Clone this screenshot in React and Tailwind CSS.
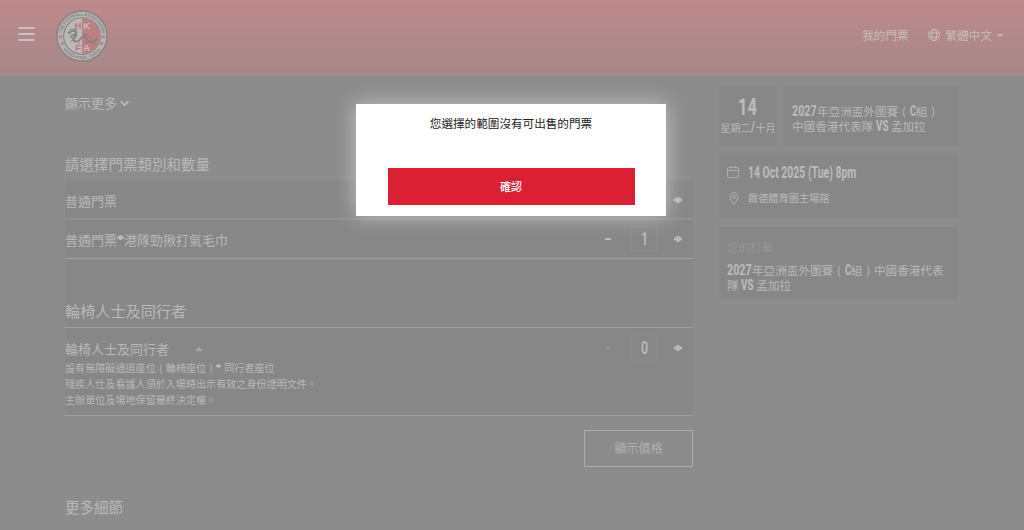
import React from "react";
import { ChevronDown } from "lucide-react";

function Condensed({ children, box, scale }) {
  return (
    <span className={`inline-block whitespace-nowrap align-baseline ${box}`}>
      <span className={`inline-block origin-left font-['Roboto'] font-extrabold text-[#bababa] ${scale}`}>{children}</span>
    </span>
  );
}

function Paren({ children }) {
  return <span className="inline-block w-[1em] text-center">{children}</span>;
}

function Crest() {
  return (
    <svg viewBox="0 0 52 52" className="h-[52px] w-[52px]" aria-hidden="true">
      <defs>
        <path id="crest-top" d="M5.7 26a20.3 20.3 0 0 1 40.6 0" />
        <path id="crest-bottom" d="M2.9 26a23.1 23.1 0 0 0 46.2 0" />
      </defs>
      <circle cx="26" cy="26" r="25" fill="#b7b4b4" stroke="#848181" strokeWidth="1.3" />
      <circle cx="26" cy="26" r="18.3" fill="#bbb8b8" stroke="#848181" strokeWidth="1.1" />
      <path d="M26 8.300a17.700 17.700 0 0 1 0 35.400z" fill="#bc7f82" />
      <g fontFamily="Liberation Sans, sans-serif" fontWeight="700" fontSize="4.300" fill="#858282">
        <text textAnchor="middle"><textPath href="#crest-top" startOffset="50%" textLength="58">THE FOOTBALL ASSOCIATION</textPath></text>
        <text textAnchor="middle"><textPath href="#crest-bottom" startOffset="50%" textLength="44">HONG KONG, CHINA</textPath></text>
      </g>
      <g fill="#b98689">
        <rect x="3" y="25.200" width="3.200" height="3.200" /><rect x="4.800" y="32" width="3.200" height="3.200" />
        <rect x="45.800" y="25.200" width="3.200" height="3.200" /><rect x="44" y="32" width="3.200" height="3.200" />
      </g>
      <g fontFamily="Liberation Sans, sans-serif" fontWeight="700" fontSize="9.500" textAnchor="middle">
        <text x="22" y="18.900" fill="#b9767a">H</text>
        <text x="30.600" y="18.900" fill="#c6c1c1">K</text>
        <text x="22.200" y="41" fill="#b9767a">F</text>
        <text x="30.600" y="41" fill="#c6c1c1">A</text>
      </g>
      <g fill="none" stroke="#817e7e" strokeLinecap="round" strokeLinejoin="round">
        <path strokeWidth="1.700" d="M12.500 23l3-1.500 4-.5 1 2-2.500 2-3 .5M19 24c2 1 1 3-1 4s0 4 3 3.500c4-.5 3-5 6.500-5s3 5 6.500 5.500c3 .4 4-1 6.500-2.500" />
        <path strokeWidth="1" d="M13 20.500l3-1.500 5 1M18 30l-3 1.500M22 32l1.500 1.500M32 31l-2 3M37 32l3 2M34 27l2 2M17 27l-3 .5M28 26l1-2 2 1.500" />
      </g>
    </svg>
  );
}

function Plus() {
  return (
    <svg viewBox="0 0 8 6" className="h-1.5 w-2" aria-hidden="true">
      <path d="M2.500 0h3v1.500H8v3H5.500V6h-3V4.500H0v-3h2.500z" fill="#bababa" />
    </svg>
  );
}

function InlinePlus({ size }) {
  return (
    <svg viewBox="0 0 8 6" className={`inline-block ${size}`} aria-hidden="true">
      <path d="M2.500 0h3v1.500H8v3H5.500V6h-3V4.500H0v-3h2.500z" fill="currentColor" />
    </svg>
  );
}

function Stepper({ value, muted, digit }) {
  return (
    <div className="flex items-center">
      <span className={`h-0.5 w-[6px] ${muted ? "bg-[#929292]" : "bg-[#bebebe]"}`} />
      <span className="ml-5 flex h-[26px] w-[26px] items-center justify-center border border-[#8d8d8d] text-[19px] text-[#bababa]">
        <span className={`font-['Roboto'] font-semibold ${digit}`}>{value}</span>
      </span>
      <span className="ml-[17px] mr-[11px] flex"><Plus /></span>
    </div>
  );
}

export default function App() {
  return (
    <div className="relative h-[530px] w-full overflow-hidden bg-[#8c8c8c] font-['Noto_Sans_CJK_TC',sans-serif] text-[#b9b9b9]">
      <header className="flex h-[76px] items-start bg-linear-to-b from-[#be898b] to-[#a5888a]">
        <button aria-label="選單" className="ml-[18px] mt-[27px] flex w-[17px] flex-col gap-1">
          <span className="h-0.5 rounded bg-[#c8c1c1]" />
          <span className="h-0.5 rounded bg-[#c8c1c1]" />
          <span className="h-0.5 rounded bg-[#c8c1c1]" />
        </button>
        <div className="ml-[21px] mt-2.5"><Crest /></div>
        <nav className="ml-auto mr-[21px] mt-[25px] flex h-5 items-center text-[11.6px] leading-5 text-[#c7bbbb]">
          <span>我的門票</span>
          <svg viewBox="0 0 12 12" className="ml-[19px] h-3 w-3 overflow-visible" fill="none" stroke="currentColor" strokeWidth="1" aria-hidden="true">
            <circle cx="6" cy="6" r="5.500" />
            <ellipse cx="6" cy="6" rx="2.600" ry="5.500" />
            <path d="M1.100 4h9.800M1.100 8h9.800" />
          </svg>
          <span className="ml-1.5">繁體中文</span>
          <svg viewBox="0 0 6 3" className="ml-[5px] h-[3px] w-[6px]" aria-hidden="true"><path d="M0 0h6L3 3z" fill="currentColor" /></svg>
        </nav>
      </header>

      <main className="flex items-start pl-[65px]">
        <section className="w-[628px]">
          <div className="flex items-center pt-[17px] text-[13px] leading-5">
            顯示更多 <ChevronDown className="ml-px mt-px h-[13px] w-[13px]" strokeWidth={3.5} />
          </div>
          <h2 className="mt-[38px] h-[30px] text-[14.5px] leading-[25px]">請選擇門票類別和數量</h2>
          <div className="bg-[#878787]">
            <div className="flex h-[39px] items-center justify-between border-b-2 border-[#919191] text-[13px]">
              <span className="pt-0.5">普通門票</span>
              <Stepper value="0" digit="scale-x-[.65]" />
            </div>
            <div className="flex h-[39px] items-center justify-between border-b border-[#a0a0a0] text-[13px]">
              <span className="pt-0.5">普通門票<InlinePlus size="h-[5px] w-[7px] align-[5px]" />港隊勁揪打氣毛巾</span>
              <Stepper value="1" digit="scale-x-[.7]" />
            </div>
            <h3 className="flex h-[69px] items-end border-b border-[#a0a0a0] pb-[5px] text-[15.15px] leading-[24px]">輪椅人士及同行者</h3>
            <div className="flex h-[88px] justify-between border-b border-[#a0a0a0]">
              <div>
                <div className="mb-px mt-[10px] flex h-[21px] items-center text-[13px]">
                  輪椅人士及同行者
                  <svg viewBox="0 0 8 4" className="ml-[26px] h-1 w-2" aria-hidden="true"><path d="M0 4h8L4 0z" fill="#a6a6a6" /></svg>
                </div>
                <p className="text-[10.08px] leading-4">設有無障礙通道座位<Paren>(</Paren>輪椅座位<Paren>)</Paren><InlinePlus size="mr-[3px] h-1 w-[5px] align-[4px]" />同行者座位</p>
                <p className="text-[10.08px] leading-4">殘疾人仕及看護人須於入場時出示有效之身份證明文件。</p>
                <p className="text-[10.08px] leading-4">主辦單位及場地保留最終決定權。</p>
              </div>
              <div className="mt-[7px]"><Stepper value="0" muted digit="scale-x-[.65]" /></div>
            </div>
          </div>
          <div className="mt-3.5 flex justify-end">
            <button className="h-[37px] w-[109px] border border-[#adadad] pb-0.5 text-[12px] text-[#b0b0b0]">顯示價格</button>
          </div>
          <h2 className="mt-[27px] text-[14.5px] leading-[25px]">更多細節</h2>
        </section>

        <aside className="ml-[26px] mt-[11px] w-[239px]">
          <div className="flex gap-[7px]">
            <div className="flex h-[58px] w-[58px] flex-col items-center bg-[#878787] pt-[7px]">
              <span className="flex h-6 w-[20px] items-center text-[24px] leading-6">
                <Condensed box="w-[19px]" scale="scale-x-[.68]">14</Condensed>
              </span>
              <span className="whitespace-nowrap text-[10px] leading-4">星期二<Condensed box="w-[5px] text-[14px] leading-4" scale="scale-x-[.8]">/</Condensed>十月</span>
            </div>
            <div className="h-[58px] w-[174px] whitespace-nowrap bg-[#878787] pl-2 pt-[15px] text-[11.6px] leading-4">
              <div className="h-[15px]"><Condensed box="w-[25px] text-[15px]" scale="scale-x-[.71]">2027</Condensed>年亞洲盃外圍賽<Paren>(</Paren><Condensed box="w-[6px] text-[15px]" scale="scale-x-[.62]">C</Condensed>組<Paren>)</Paren></div>
              <div className="h-4">中國香港代表隊 <Condensed box="w-[12.5px] text-[15px]" scale="scale-x-[.65]">VS</Condensed> 孟加拉</div>
            </div>
          </div>

          <div className="mt-[8px] h-16 bg-[#878787] pl-2 pt-[7px]">
            <div className="flex h-6 items-center">
              <svg viewBox="0 0 12 12" className="h-3 w-3" fill="none" stroke="#adadad" aria-hidden="true"><rect x=".5" y="1.500" width="11" height="10" rx="1" /><path d="M.5 4.500h11M3.500 0v2.500M8.500 0v2.500" /></svg>
              <span className="ml-[9px] text-[16px] leading-6"><Condensed box="w-[109px]" scale="scale-x-[.65]">14 Oct 2025 (Tue) 8pm</Condensed></span>
            </div>
            <div className="mt-[3px] flex h-[22px] items-center text-[10.2px]">
              <svg viewBox="0 0 10 13" className="ml-[2px] h-[13px] w-2.5" fill="none" stroke="#b0b0b0" aria-hidden="true"><path d="M5 12.300C3 9.500.8 7 .8 4.800a4.200 4.200 0 0 1 8.400 0C9.200 7 7 9.500 5 12.300z" /><circle cx="5" cy="4.800" r="1.700" /></svg>
              <span className="ml-[9px]">啟德體育園主場館</span>
            </div>
          </div>

          <div className="mt-[10px] h-[72px] whitespace-nowrap bg-[#878787] pl-2 pt-[10px] text-[11.6px] leading-4">
            <div className="h-[24px] leading-5 text-[#969696]">您的訂單</div>
            <div className="h-[15px]"><Condensed box="w-[25px] text-[15px]" scale="scale-x-[.71]">2027</Condensed>年亞洲盃外圍賽<Paren>(</Paren><Condensed box="w-[6px] text-[15px]" scale="scale-x-[.62]">C</Condensed>組<Paren>)</Paren>中國香港代表</div>
            <div className="h-4">隊 <Condensed box="w-[12.5px] text-[15px]" scale="scale-x-[.65]">VS</Condensed> 孟加拉</div>
          </div>
        </aside>
      </main>

      <div role="dialog" className="absolute left-[356px] top-[104px] flex h-[112px] w-[310px] flex-col items-center bg-white shadow-[0_0_20px_rgba(255,255,255,0.5)]">
        <p className="mt-[9px] text-[11.6px] leading-5 text-[#222]">您選擇的範圍沒有可出售的門票</p>
        <button className="mt-[35px] h-[37px] w-[247px] bg-[#dc2034] text-[11px] font-medium text-white">確認</button>
      </div>
    </div>
  );
}
